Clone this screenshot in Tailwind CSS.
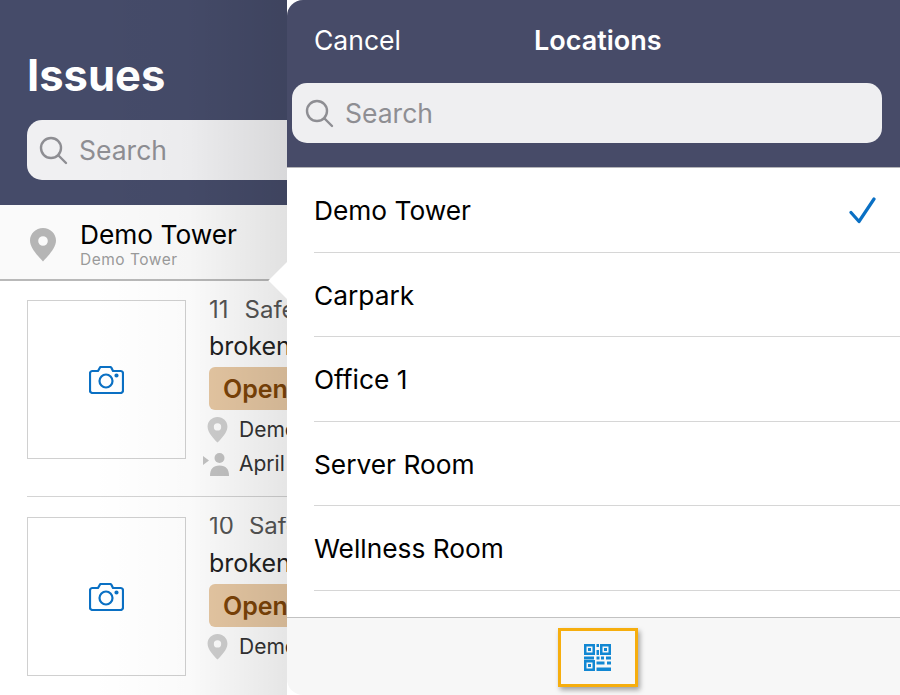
<!DOCTYPE html>
<html lang="en">
<head>
  <meta charset="UTF-8" />
  <title>Issues</title>
  <script src="https://cdn.jsdelivr.net/npm/@tailwindcss/browser@4"></script>
</head>
<body class="w-[900px] h-[695px] overflow-hidden bg-white font-['Inter','Liberation_Sans',sans-serif]">
  <div class="relative w-[900px] h-[695px] overflow-hidden">

    <!-- issues list behind the popover -->
    <div class="w-[287px] h-[695px] overflow-hidden">
      <header class="h-[205px] bg-[#454b69] pl-[27px] pt-[47px]">
        <h1 class="text-[43.5px] leading-[56px] font-bold text-white">Issues</h1>
        <div class="mt-[17px] w-[300px] h-[60px] rounded-[15px] bg-[#f0f0f2] flex items-center pl-[12px] gap-[11px]">
          <svg class="w-[29px] h-[29px] text-[#8e8e93]" viewBox="0 0 29 29" fill="none" stroke="currentColor" stroke-width="2.4" stroke-linecap="round"><circle cx="12" cy="12" r="10"/><path d="M19.5 19.5 27 27"/></svg>
          <span class="text-[26.5px] pt-[1px] text-[#8e8e93]">Search</span>
        </div>
      </header>

      <div class="h-[76px] bg-[#fafafa] border-b-2 border-[#b9b9b9] flex pl-[30px] pt-[14px] gap-[24px]">
        <svg class="w-[26px] h-[34px] mt-[9px]" viewBox="0 0 26 34"><path fill-rule="evenodd" fill="#b5b5b5" d="M13 0C5.800 0 0 5.600 0 12.600 0 20.500 8.500 28.500 13 33.500 17.500 28.500 26 20.500 26 12.600 26 5.600 20.200 0 13 0Zm0 8.200a4.800 4.800 0 1 1 0 9.600 4.800 4.800 0 0 1 0-9.600Z"/></svg>
        <div>
          <div class="text-[26.3px] leading-[32px] text-black whitespace-nowrap">Demo Tower</div>
          <div class="text-[15.5px] leading-[18px] tracking-[0.5px] text-[#9a9a9a] whitespace-nowrap">Demo Tower</div>
        </div>
      </div>

      <div class="pl-[27px]">
        <article class="h-[216px] pt-[19px] flex gap-[17px] border-b border-[#d4d4d4] whitespace-nowrap">
          <div class="w-[159px] h-[159px] shrink-0 border border-[#d0d0d0] bg-white flex items-center justify-center">
            <svg class="w-[35px] h-[28px] text-[#0a70c4]" viewBox="0 0 35 28" fill="none" stroke="currentColor" stroke-width="2.2" stroke-linejoin="round"><path d="M3.500 5H9l2-3.500c.3-.4.6-.5 1-.5h9c.7 0 1.100.2 1.400.7L24 5h7.500C33 5 34 6 34 7.500v17c0 1.500-1 2.500-2.500 2.500h-28C2 27 1 26 1 24.500v-17C1 6 2 5 3.500 5Z"/><circle cx="17" cy="15" r="6.500"/><circle cx="27.500" cy="9.500" r="1" fill="currentColor"/></svg>
          </div>
          <div class="w-[96px] pl-[6px] overflow-hidden">
            <div class="text-[24px] leading-[20px] h-[27px] text-[#555]">11<span class="ml-[16px]">Safety</span></div>
            <div class="text-[25px] leading-[36px] text-[#222] mt-[1px]">broken light</div>
            <div class="mt-[3px] w-[120px] h-[43px] rounded-[6px] bg-[#e8c9a4] pl-[14px] text-[25px] leading-[45px] font-semibold text-[#7c4408]">Open</div>
            <div class="flex items-center h-[37px] mt-[1px]">
              <svg class="w-[21px] h-[26px] shrink-0 mr-[11px] ml-[-2px]" viewBox="0 0 26 34"><path fill-rule="evenodd" fill="#d0d0d0" d="M13 0C5.800 0 0 5.600 0 12.600 0 20.500 8.500 28.500 13 33.500 17.500 28.500 26 20.500 26 12.600 26 5.600 20.200 0 13 0Zm0 8.200a4.800 4.800 0 1 1 0 9.600 4.800 4.800 0 0 1 0-9.600Z"/></svg>
              <span class="text-[21px] text-[#333]">Demo Tower</span>
            </div>
            <div class="flex items-center h-[32px]">
              <svg class="w-[27px] h-[23px] shrink-0 mr-[9px] ml-[-6px]" viewBox="0 0 27 23" fill="#c4c4c4"><path d="M0 3 6 7.500 0 12Z"/><circle cx="16.500" cy="5" r="5"/><path d="M7 23c0-7 3-10.500 9.500-10.500S26 16 26 23Z"/></svg>
              <span class="text-[21px] text-[#333]">April 2021</span>
            </div>
          </div>
        </article>

        <article class="pt-[20px] flex gap-[17px] whitespace-nowrap">
          <div class="w-[159px] h-[159px] shrink-0 border border-[#d0d0d0] bg-white flex items-center justify-center">
            <svg class="w-[35px] h-[28px] text-[#0a70c4]" viewBox="0 0 35 28" fill="none" stroke="currentColor" stroke-width="2.2" stroke-linejoin="round"><path d="M3.500 5H9l2-3.500c.3-.4.6-.5 1-.5h9c.7 0 1.100.2 1.400.7L24 5h7.500C33 5 34 6 34 7.500v17c0 1.500-1 2.500-2.500 2.500h-28C2 27 1 26 1 24.500v-17C1 6 2 5 3.500 5Z"/><circle cx="17" cy="15" r="6.500"/><circle cx="27.500" cy="9.500" r="1" fill="currentColor"/></svg>
          </div>
          <div class="w-[96px] pl-[6px] overflow-hidden">
            <div class="text-[24px] leading-[20px] mt-[-1px] h-[27px] text-[#555]">10<span class="ml-[15px]">Safety</span></div>
            <div class="text-[25px] leading-[36px] text-[#222] mt-[2px]">broken light</div>
            <div class="mt-[3px] w-[120px] h-[43px] rounded-[6px] bg-[#e8c9a4] pl-[14px] text-[25px] leading-[45px] font-semibold text-[#7c4408]">Open</div>
            <div class="flex items-center h-[37px] mt-[1px]">
              <svg class="w-[21px] h-[26px] shrink-0 mr-[11px] ml-[-2px]" viewBox="0 0 26 34"><path fill-rule="evenodd" fill="#d0d0d0" d="M13 0C5.800 0 0 5.600 0 12.600 0 20.500 8.500 28.500 13 33.500 17.500 28.500 26 20.500 26 12.600 26 5.600 20.200 0 13 0Zm0 8.200a4.800 4.800 0 1 1 0 9.600 4.800 4.800 0 0 1 0-9.600Z"/></svg>
              <span class="text-[21px] text-[#333]">Demo Tower</span>
            </div>
          </div>
        </article>
      </div>
    </div>

    <!-- shadow the popover throws on the list -->
    <div class="absolute left-[90px] top-0 w-[197px] h-[695px] bg-gradient-to-r from-black/0 via-black/2 to-black/10"></div>

    <!-- popover arrow -->
    <div class="absolute left-[274px] top-[267px] w-[27px] h-[27px] rotate-45 bg-white"></div>

    <!-- locations popover -->
    <section class="absolute left-[287px] top-0 w-[613px] h-[695px] bg-white rounded-l-[16px] overflow-hidden flex flex-col">
      <div class="h-[168px] shrink-0 bg-[#474b68] border-b border-[#b5b5b8]">
        <div class="h-[83px] relative">
          <span class="absolute left-[27px] top-[23px] text-[26.5px] leading-[34px] text-white">Cancel</span>
          <span class="absolute left-[247px] top-[24px] text-[27px] leading-[34px] font-semibold text-white">Locations</span>
        </div>
        <div class="ml-[5px] mr-[18px] h-[60px] rounded-[15px] bg-[#efeff1] flex items-center pl-[13px] gap-[11px]">
          <svg class="w-[29px] h-[29px] text-[#8e8e93]" viewBox="0 0 29 29" fill="none" stroke="currentColor" stroke-width="2.4" stroke-linecap="round"><circle cx="12" cy="12" r="10"/><path d="M19.500 19.500 27 27"/></svg>
          <span class="text-[26.5px] pt-[1px] text-[#8e8e93]">Search</span>
        </div>
      </div>

      <ul class="flex-1 pl-[27px] text-[26.3px] text-black">
        <li class="h-[84.500px] pt-[2px] border-b border-[#d6d6d6] flex items-center justify-between pr-[24px]">
          <span>Demo Tower</span>
          <svg class="w-[27px] h-[27px]" viewBox="0 0 27 27" fill="none" stroke="#0a70c4" stroke-width="3.200" stroke-linecap="round" stroke-linejoin="round"><path d="M2 15.500 10 24.500 25 2"/></svg>
        </li>
        <li class="h-[84.500px] pt-[2px] border-b border-[#d6d6d6] flex items-center">Carpark</li>
        <li class="h-[84.500px] pt-[2px] border-b border-[#d6d6d6] flex items-center">Office 1</li>
        <li class="h-[84.500px] pt-[2px] border-b border-[#d6d6d6] flex items-center">Server Room</li>
        <li class="h-[84.500px] pt-[2px] border-b border-[#d6d6d6] flex items-center">Wellness Room</li>
      </ul>

      <div class="h-[78px] shrink-0 bg-[#f7f7f7] border-t border-[#c2c2c2] flex justify-center pt-[10px] pl-[8px]">
        <div class="w-[80px] h-[59px] border-[3px] border-[#f6ae0e] shadow-[2px_3px_5px_rgba(0,0,0,0.35)] flex items-center justify-center">
          <svg class="w-[27px] h-[27px]" viewBox="0 0 27 27" fill="#1187d3">
            <path fill-rule="evenodd" d="M0 0h11v11H0Zm2.500 2.500v6h6v-6Z"/><path d="M4 4h3v3H4Z"/>
            <path fill-rule="evenodd" d="M16 0h11v11H16Zm2.500 2.500v6h6v-6Z"/><path d="M20 4h3v3h-3Z"/>
            <path d="M12.500 0h2.500v3h-2.500ZM12.500 6h2.500v5h-2.500Z"/>
            <path d="M0 12.500h10v3H0ZM12.500 12.500h3v3h-3ZM17 12.500h3v3h-3ZM22 12.500h5v3h-5ZM12.500 17.500h8v3h-8ZM23 17.500h4v3h-4ZM12.500 23.500h14.500v3.500H12.500Z"/>
            <path fill-rule="evenodd" d="M0 16h11v11H0Zm2.500 2.500v6h6v-6Z"/><path d="M4 20h3v3H4Z"/>
          </svg>
        </div>
      </div>
    </section>
  </div>
</body>
</html>
